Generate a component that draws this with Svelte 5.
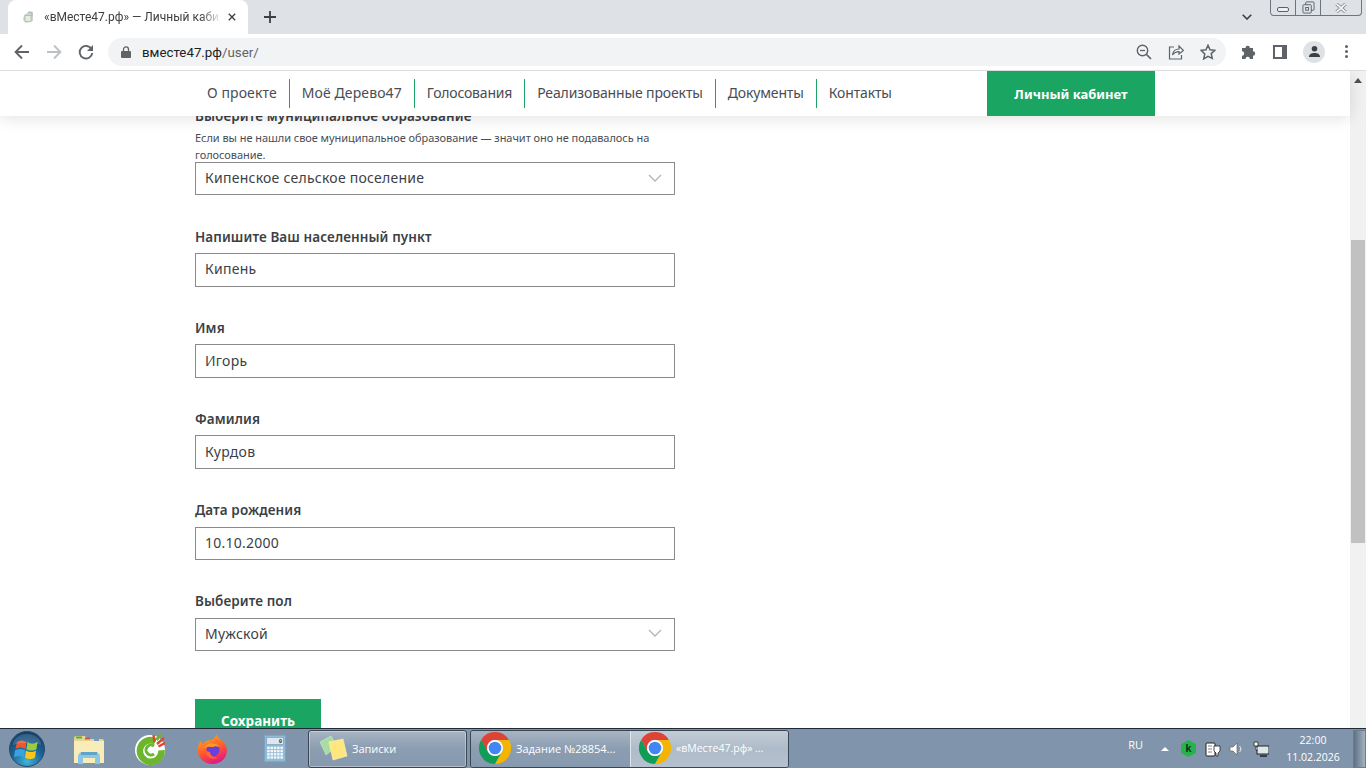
<script>
  const nav = ['О проекте', 'Моё Дерево47', 'Голосования', 'Реализованные проекты', 'Документы', 'Контакты'];
  const fields = [
    { label: 'Напишите Ваш населенный пункт', value: 'Кипень' },
    { label: 'Имя', value: 'Игорь' },
    { label: 'Фамилия', value: 'Курдов' },
    { label: 'Дата рождения', value: '10.10.2000' },
    { label: 'Выберите пол', value: 'Мужской', select: true }
  ];
  const calcKeys = [];
  for (let r = 0; r < 4; r++) for (let c = 0; c < 5; c++) calcKeys.push({ x: 3.5 + c * 3.6, y: 13 + r * 3.5 });
</script>

{#snippet chromeLogo()}
  <svg class="chrome" viewBox="0 0 32 32">
    <path d="M2.14 8A16 16 0 0 1 29.86 8H16A8 8 0 0 0 9.07 20z" fill="#db4437"/>
    <path d="M9.07 20L2.14 8A16 16 0 0 0 16 32l6.93-12a8 8 0 0 1-13.860 0z" fill="#0f9d58"/>
    <path d="M29.86 8H16a8 8 0 0 1 6.930 12L16 32A16 16 0 0 0 29.86 8z" fill="#f4b400"/>
    <circle cx="16" cy="16" r="8" fill="#fff"/>
    <circle cx="16" cy="16" r="6.300" fill="#4285f4"/>
  </svg>
{/snippet}

{#snippet chevron()}
  <svg class="chev" viewBox="0 0 14 8"><path d="M1 1l6 6 6-6" fill="none" stroke="#b4b4b4" stroke-width="1.3"/></svg>
{/snippet}

<div class="screen">
  <div class="tabstrip">
    <div class="tab">
      <svg class="fav" viewBox="0 0 14 14"><path d="M2 10l1-5 6-4 3 1v9l-7 2z" fill="#cdd8cc"/><path d="M4 5.500h6v6H4z" fill="#e6ebe4" stroke="#a5b2a4" stroke-width=".7"/><path d="M7 2l4 1v3" fill="none" stroke="#9fae9e" stroke-width=".7"/></svg>
      <span class="tabtitle">«вМесте47.рф» — Личный каби</span>
      <svg class="tabx" viewBox="0 0 10 10"><path d="M1 1l8 8M9 1l-8 8" stroke="#3c4043" stroke-width="1.7"/></svg>
    </div>
    <svg class="plus" viewBox="0 0 12 12"><path d="M6 0v12M0 6h12" stroke="#3c4043" stroke-width="1.8"/></svg>
    <div class="stripfill"></div>
    <svg class="tabchev" viewBox="0 0 10 6"><path d="M.7.700L5 5 9.300.7" fill="none" stroke="#3c4043" stroke-width="1.6"/></svg>
    <div class="wincontrols">
      <div class="wc wmin"><span></span></div>
      <div class="wc wmax"><svg viewBox="0 0 14 14"><rect x="4" y="1" width="9" height="9" rx="1" fill="none" stroke="#5a6068"/><rect x="1" y="4" width="9" height="9" rx="1" fill="#dee1e6" stroke="#5a6068"/><rect x="4" y="7" width="3" height="3" fill="none" stroke="#5a6068"/></svg></div>
      <div class="wc wclose"><svg viewBox="0 0 12 10"><path d="M1.500 1L10.500 9M10.500 1L1.500 9" stroke="#70757c" stroke-width="3.200"/><path d="M1.500 1L10.500 9M10.500 1L1.500 9" stroke="#f2f4f6" stroke-width="1.800"/></svg></div>
    </div>
  </div>

  <div class="toolbar">
    <svg class="tool" viewBox="0 0 16 16"><path d="M15 8H2M8 1.500L1.600 8 8 14.500" fill="none" stroke="#5f6368" stroke-width="1.900"/></svg>
    <svg class="tool" viewBox="0 0 16 16"><path d="M1 8h13M8 1.500L14.400 8 8 14.500" fill="none" stroke="#bdc1c6" stroke-width="1.900"/></svg>
    <svg class="tool" viewBox="0 0 16 16"><path d="M13.600 5.200A6.300 6.300 0 1 0 14.300 9" fill="none" stroke="#5f6368" stroke-width="1.900"/><path d="M15 1v6H9z" fill="#5f6368"/></svg>
    <div class="omni">
      <svg class="lock" viewBox="0 0 10 12"><path d="M2.500 5V3.400a2.500 2.500 0 0 1 5 0V5" fill="none" stroke="#5f6368" stroke-width="1.300"/><rect y="5" width="10" height="7" rx="1" fill="#5f6368"/></svg>
      <span class="url">вместе47.рф<span class="path">/user/</span></span>
      <div class="omnifill"></div>
      <svg class="oicon" viewBox="0 0 16 16"><circle cx="6.500" cy="6.500" r="5.200" fill="none" stroke="#5f6368" stroke-width="1.400"/><path d="M10.400 10.400L15 15" stroke="#5f6368" stroke-width="1.600"/><path d="M4 6.500h5" stroke="#5f6368" stroke-width="1.300"/></svg>
      <svg class="oicon" viewBox="0 0 16 16"><path d="M6 3H1.500v12h12v-4" fill="none" stroke="#5f6368" stroke-width="1.200"/><path d="M4.500 11c.5-4 3-6 6.500-6V2l4.500 4.500L11 10V7.600c-2.700 0-4.800 1-6.500 3.400z" fill="none" stroke="#5f6368" stroke-width="1.200"/></svg>
      <svg class="oicon" viewBox="0 0 16 16"><path d="M8 1.300l2 4.500 4.900.5-3.700 3.300 1.100 4.800L8 12.400l-4.300 2.500 1.100-4.800L1.100 6.300l4.900-.5z" fill="none" stroke="#5f6368" stroke-width="1.500"/></svg>
    </div>
    <svg class="tool ext" viewBox="0 0 16 16"><path d="M1 4h3.500a2.200 2.200 0 1 1 4.400 0H12v3.300a2.200 2.200 0 1 1 0 4.400V15H8.900a2.200 2.200 0 1 0-4.400 0H1v-3.300a2.200 2.200 0 1 0 0-4.400z" fill="#5f6368"/></svg>
    <svg class="tool panel" viewBox="0 0 14 14"><rect width="14" height="14" fill="#5f6368"/><rect x="2" y="2" width="7" height="10" fill="#fff"/></svg>
    <div class="avatar"><svg viewBox="0 0 14 14"><circle cx="7" cy="4" r="3" fill="#3c4043"/><path d="M1 13c0-3.500 3-4.500 6-4.500s6 1 6 4.500z" fill="#3c4043"/></svg></div>
    <div class="dots"><i></i><i></i><i></i></div>
  </div>

  <div class="viewport">
    <header class="sitehead">
      <nav class="sitenav">
        {#each nav as item}<a href="#top">{item}</a>{/each}
      </nav>
      <a class="cabinet" href="#top">Личный кабинет</a>
    </header>

    <main class="page">
      <form class="form">
        <div class="field first">
          <div class="label">Выберите муниципальное образование</div>
          <p class="hint">Если вы не нашли свое муниципальное образование — значит оно не подавалось на голосование.</p>
          <div class="box short"><span>Кипенское сельское поселение</span>{@render chevron()}</div>
        </div>
        {#each fields as f}
          <div class="field">
            <div class="label">{f.label}</div>
            <div class="box" class:short={f.select}><span>{f.value}</span>{#if f.select}{@render chevron()}{/if}</div>
          </div>
        {/each}
        <button type="button" class="save">Сохранить</button>
      </form>
    </main>

    <div class="scrollbar">
      <svg class="arrow" viewBox="0 0 8 5"><path d="M4 0l4 5H0z" fill="#505050"/></svg>
      <div class="thumb"></div>
    </div>
  </div>

  <footer class="taskbar">
    <svg class="orb" viewBox="0 0 36 36">
      <defs>
        <radialGradient id="orbg" cx=".5" cy=".85" r=".9"><stop offset="0" stop-color="#3fb6d8"/><stop offset=".5" stop-color="#1b6296"/><stop offset="1" stop-color="#12395f"/></radialGradient>
      </defs>
      <circle cx="18" cy="18" r="17.500" fill="url(#orbg)" stroke="#2c4a64"/>
      <path d="M8 11c3-2 6-2 9.500 0l-1 7c-3-2-6-2-10 0z" fill="#f0562a"/>
      <path d="M18.500 11c3 2 6 2 10 0l-1 7c-3 2-7 2-10 0z" fill="#9ccc3c"/>
      <path d="M6 19.500c3-2 7-2 10 0l-1 7c-3-2-6-2-10 0z" fill="#3aa2e0"/>
      <path d="M17 19.500c3 2 7 2 10 0l-1 7c-3 2-7 2-10 0z" fill="#fbc51d"/>
      <path d="M4 14a14 11 0 0 1 28 0c-8-3-20-3-28 0z" fill="#fff" opacity=".14"/>
    </svg>
    <svg class="qi explorer" viewBox="0 0 32 32">
      <path d="M1 5c0-1 1-2 2-2h9l2 3h15c1 0 2 1 2 2v22H1z" fill="#e8d48a"/><rect x="1" y="8" width="30" height="22" fill="#f8ecb8"/>
      <rect x="3" y="3.500" width="6" height="2" fill="#4caf50"/><rect x="12" y="4.500" width="5" height="2" fill="#d9534f"/><rect x="21" y="6" width="5" height="2" fill="#5aa6d6"/>
      <path d="M5 31v-7c0-3 2-5 5-5h12c3 0 5 2 5 5v7h-5v-6H10v6z" fill="#8cc6e4"/>
      <rect x="8" y="19" width="16" height="3" fill="#5fa3c9"/>
    </svg>
    <svg class="qi" viewBox="0 0 32 32">
      <circle cx="15" cy="17" r="15" fill="#fff"/>
      <path d="M20.500 8.300a10.800 10.800 0 1 0 6 9" fill="none" stroke="#6cb52d" stroke-width="6.500"/>
      <path d="M19 13a5 5 0 1 0 0 8" fill="none" stroke="#6cb52d" stroke-width="3"/>
      <path d="M18.500 2l1 7M30 10l-6.500 3.500M29 5l-7 6" stroke="#e2452b" stroke-width="2.400"/><path d="M26 1l-4.500 6" stroke="#6cb52d" stroke-width="3"/>
    </svg>
    <svg class="qi" viewBox="0 0 32 32">
      <defs><linearGradient id="ffg" x1=".2" y1="0" x2=".6" y2="1"><stop offset="0" stop-color="#ffb01f"/><stop offset=".55" stop-color="#ff5a2c"/><stop offset="1" stop-color="#e31587"/></linearGradient></defs>
      <path d="M19 1c1 4 6 5 9 10 4 7 1 15-5 18-7 4-17 2-21-6C-1 17 1 11 4 8c0 2 1 3 2 3 2-3 5-4 8-4 3-1 5-3 5-6z" fill="url(#ffg)"/>
      <circle cx="16" cy="17" r="6.500" fill="#6d3fd8"/>
      <path d="M7 15c3-6 12-6 16-1-3-1-6-1-7 0-2 0-5-1-9 1z" fill="#ff9a1f"/>
      <path d="M9 18c0 6 6 9 12 7-5 0-8-3-8-6z" fill="#ff6a2a"/>
    </svg>
    <svg class="qi calc" viewBox="0 0 24 30">
      <rect x=".5" y=".5" width="23" height="29" fill="#8fbbd8" stroke="#7ba3bf"/>
      <rect x="3" y="3" width="18" height="7.500" fill="#dbe8f1" stroke="#7b97ab" stroke-width=".6"/>
      <text x="16" y="9" class="calc0">0</text>
      {#each calcKeys as k}<rect x={k.x} y={k.y} width="2.700" height="2.600" fill="#f5f8fa"/>{/each}
    </svg>

    <div class="taskbtn notes">
      <svg class="noteicon" viewBox="0 0 30 28"><path d="M2 8L13 2l6 10-11 9z" fill="#a8dda2" stroke="#d4f0d0" stroke-width=".5"/><path d="M11 8l14-3 4 17-14 4z" fill="#ffe77f" stroke="#fff4bd" stroke-width=".6"/></svg>
      <span>Записки</span>
    </div>
    <div class="taskgroup">
      <div class="taskbtn chromebtn">{@render chromeLogo()}<span>Задание №28854...</span></div>
      <div class="taskbtn chromebtn active">{@render chromeLogo()}<span>«вМесте47.рф» ...</span></div>
    </div>
    <div class="taskfill"></div>
    <div class="lang">RU</div>
    <svg class="tri" viewBox="0 0 8 4"><path d="M4 0l4 4H0z" fill="#fff"/></svg>
    <svg class="tray kas" viewBox="0 0 14 16"><path d="M7 0l7 4v8l-7 4-7-4V4z" fill="#26b34b"/><text x="7" y="11.500" class="kk">k</text></svg>
    <svg class="tray" viewBox="0 0 16 16"><rect x="1" y="2" width="9" height="13" rx="1" fill="#fff" stroke="#222"/><path d="M3 5h4M3 8h4M3 11h4" stroke="#666" stroke-width=".8"/><path d="M9 5h6v5l-2 2v3h-2v-3L9 10z" fill="#fff" stroke="#222" stroke-width=".8"/></svg>
    <svg class="tray" viewBox="0 0 16 16"><path d="M1 6h3l4-4v12l-4-4H1z" fill="#fff" stroke="#555" stroke-width=".6"/><path d="M10.500 5a4 4 0 0 1 0 6" fill="none" stroke="#eee"/></svg>
    <svg class="tray" viewBox="0 0 16 16"><rect x="4" y="5" width="12" height="8" fill="#dfe6ec" stroke="#222"/><path d="M7 15h7" stroke="#222" stroke-width="1.500"/><path d="M1 1h4v4H1zM3 5v4h2" fill="#fff" stroke="#222" stroke-width=".8"/></svg>
    <div class="clock"><div>22:00</div><div>11.02.2026</div></div>
    <div class="showdesk"></div>
  </footer>
</div>

<style>
  :global(body) { margin: 0; overflow: hidden; background: #fff; }
  .screen { width: 1366px; height: 768px; display: flex; flex-direction: column; overflow: hidden; font-family: "Noto Sans", "Liberation Sans", sans-serif; }

  .tabstrip { height: 34px; flex: none; background: #dee1e6; display: flex; align-items: flex-start; padding-left: 8px; box-sizing: border-box; position: relative; }
  .tab { width: 240px; height: 34px; background: #fff; border-radius: 8px 8px 0 0; display: flex; align-items: center; box-sizing: border-box; padding-left: 13px; }
  .fav { width: 14px; height: 14px; flex: none; }
  .tabtitle { font: 12px "Roboto", "Liberation Sans", sans-serif; color: #3c4043; margin-left: 9px; width: 174px; white-space: nowrap; flex: none; -webkit-mask-image: linear-gradient(90deg, #000 90%, rgba(0,0,0,.15)); mask-image: linear-gradient(90deg, #000 90%, rgba(0,0,0,.15)); }
  .tabx { width: 8px; height: 8px; margin-left: 10px; flex: none; }
  .plus { width: 12px; height: 12px; margin: 11px 0 0 16px; flex: none; }
  .stripfill { flex: 1; }
  .tabchev { width: 10px; height: 6px; margin: 14px 18px 0 0; flex: none; }
  .wincontrols { display: flex; height: 16px; width: 92px; margin-right: 4px; border: 1px solid #6f747b; border-top: 0; border-radius: 0 0 4px 4px; box-sizing: border-box; flex: none; }
  .wc { display: flex; align-items: center; justify-content: center; border-right: 1px solid #6f747b; box-sizing: border-box; }
  .wmin { width: 25px; }
  .wmin span { width: 12px; height: 5px; border: 1px solid #5a6068; border-radius: 2px; background: #eef0f2; box-sizing: border-box; margin-top: 4px; }
  .wmax { width: 25px; }
  .wmax svg { width: 13px; height: 13px; }
  .wclose { flex: 1; border-right: 0; }
  .wclose svg { width: 12px; height: 10px; }

  .toolbar { height: 37px; flex: none; background: #fff; display: flex; align-items: center; border-bottom: 1px solid #dadce0; box-sizing: border-box; padding: 0 0 1px 14px; }
  .tool { width: 16px; height: 16px; flex: none; margin-right: 16px; }
  .omni { width: 1118px; height: 28px; margin-left: -2px; margin-right: 14px; background: #f1f3f4; border-radius: 14px; display: flex; align-items: center; padding: 0 10px 0 13px; box-sizing: border-box; flex: none; }
  .lock { width: 10px; height: 12px; flex: none; }
  .url { font: 13.300px "Roboto", "Liberation Sans", sans-serif; color: #202124; margin-left: 11px; position: relative; top: 1px; }
  .path { color: #5f6368; }
  .omnifill { flex: 1; }
  .oicon { width: 16px; height: 16px; margin-left: 16px; flex: none; }
  .ext { margin: 0 16px 0 1px; }
  .panel { width: 14px; height: 14px; margin: 0 16px 0 0; }
  .avatar { width: 22px; height: 22px; background: #dee1e6; border-radius: 50%; display: flex; align-items: center; justify-content: center; flex: none; }
  .avatar svg { width: 13px; height: 13px; }
  .dots { display: flex; flex-direction: column; gap: 2px; margin-left: 20px; }
  .dots i { width: 3px; height: 3px; border-radius: 50%; background: #5f6368; }

  .viewport { flex: 1; min-height: 0; position: relative; overflow: hidden; display: flex; }
  .sitehead { position: absolute; left: 0; top: 0; width: 1350px; height: 45px; background: #fff; box-shadow: 0 2px 16px rgba(0,0,0,.12); display: flex; z-index: 2; padding-left: 195px; box-sizing: border-box; }
  .sitenav { display: flex; align-items: center; width: 792px; }
  .sitenav a { font-size: 14px; color: #4a4d53; text-decoration: none; padding: 0 12px; height: 29px; line-height: 28px; border-left: 1px solid #1ba465; white-space: nowrap; }
  .sitenav a:first-child { border-left: 0; letter-spacing: .1px; }
  .sitenav a:nth-child(2) { letter-spacing: .11px; }
  .sitenav a:nth-child(3) { letter-spacing: -.2px; }
  .sitenav a:nth-child(4) { letter-spacing: -.13px; }
  .sitenav a:nth-child(5) { letter-spacing: -.15px; }
  .sitenav a:nth-child(6) { letter-spacing: -.15px; }
  .cabinet { width: 168px; height: 45px; background: #1ba562; color: #fff; font-size: 13px; font-weight: 700; text-decoration: none; display: flex; align-items: center; justify-content: center; }

  .page { flex: 1; min-width: 0; padding-left: 195px; background: #fff; }
  .form { width: 480px; margin-top: 36px; }
  .field { margin-bottom: 31.650px; }
  .field.first { margin-bottom: 32px; }
  .label { font-size: 13.500px; font-weight: 600; line-height: 18px; letter-spacing: .09px; color: #3c3f46; padding-top: .5px; margin-bottom: 7.500px; }
  .first .label { margin-bottom: 3.500px; padding-top: 0; }
  .hint { margin: 0 0 -.5px; font-size: 11px; line-height: 17px; letter-spacing: -.05px; color: #4a4d54; }
  .box { height: 33.600px; border: 1px solid #8a8a8a; box-sizing: border-box; display: flex; align-items: center; justify-content: space-between; padding: 0 12px 2px 9px; font-size: 14px; color: #3c3f46; letter-spacing: .25px; }
  .box.short { height: 33px; }
  .chev { width: 14px; height: 8px; }
  .save { display: block; width: 126px; height: 44px; margin-top: 48px; border: 0; background: #1ba562; color: #fff; font: 700 13.500px "Noto Sans", sans-serif; }

  .scrollbar { width: 16px; flex: none; background: #f1f1f1; display: flex; flex-direction: column; align-items: center; position: relative; }
  .arrow { width: 8px; height: 5px; margin-top: 7px; flex: none; }
  .thumb { position: absolute; top: 169px; left: 1px; width: 14px; height: 303px; background: #c1c1c1; }

  .taskbar { height: 40px; flex: none; background: #8095ab; border-top: 1px solid #1f2a36; box-sizing: border-box; display: flex; align-items: center; position: relative; color: #fff; font-family: "Open Sans", "Liberation Sans", sans-serif; }
  .orb { width: 36px; height: 36px; margin-left: 9px; flex: none; }
  .qi { width: 32px; height: 32px; flex: none; margin-left: 30px; }
  .explorer { margin-left: 28px; }
  .calc { width: 22px; height: 29px; margin-left: 35px; }
  .calc0 { font: 700 6px "Liberation Mono", monospace; fill: #333; }
  .taskbtn { height: 38px; display: flex; align-items: center; box-sizing: border-box; font-size: 11px; padding-bottom: 1px; }
  .notes { width: 159px; margin-left: 22px; border: 1px solid #3a4654; border-radius: 3px; background: linear-gradient(#a7b4c3, #8b9db1 50%, #8799ae); padding-left: 9px; box-shadow: inset 0 0 0 1px rgba(255,255,255,.35); }
  .noteicon { width: 30px; height: 28px; flex: none; }
  .notes span { margin-left: 4px; }
  .taskgroup { margin-left: 3px; width: 319px; display: flex; height: 38px; border: 1px solid #3a4654; border-radius: 3px; box-sizing: border-box; overflow: hidden; box-shadow: inset 0 0 0 1px rgba(255,255,255,.35); }
  .chromebtn { width: 159px; padding-left: 8px; height: 36px; background: linear-gradient(#a7b4c3, #8b9db1 50%, #8799ae); }
  .chromebtn.active { flex: 1; background: linear-gradient(#c3ccd6, #aebbc9 50%, #b5c1ce); border-left: 1px solid #dfe5eb; }
  .chrome { width: 32px; height: 32px; flex: none; margin-right: 5px; }
  .active span { font-size: 10.500px; }
  .taskfill { flex: 1; }
  .lang { font-size: 11px; margin: -8px 18px 0 1px; }
  .tri { width: 8px; height: 4px; margin-right: 12px; flex: none; }
  .tray { width: 16px; height: 16px; margin-right: 8px; flex: none; }
  .kas { width: 15px; height: 17px; margin-right: 9px; }
  .kk { font: 700 10px "Liberation Sans", sans-serif; fill: #0c2d17; text-anchor: middle; }
  .clock { width: 66px; margin-left: 3px; font-size: 10.500px; line-height: 17px; text-align: center; flex: none; }
  .showdesk { width: 13px; height: 38px; margin-left: 7px; flex: none; background: linear-gradient(90deg, #5f7185, #a4b2c0); border: 1px solid #6d7b8a; box-sizing: border-box; }
</style>
